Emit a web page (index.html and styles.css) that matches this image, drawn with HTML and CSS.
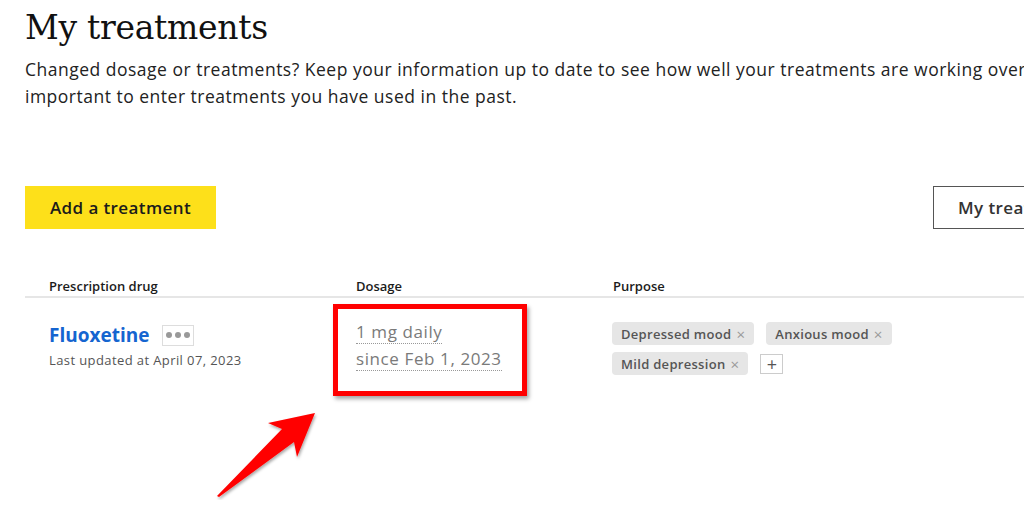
FILE: index.html
```html
<!DOCTYPE html>
<html lang="en">
<head>
<meta charset="utf-8">
<title>My treatments</title>
<link rel="stylesheet" href="styles.css">
</head>
<body>
<div class="page">
  <h1 class="title">My treatments</h1>
  <p class="intro">Changed dosage or treatments? Keep your information up to date to see how well your treatments are working over time. It's also important to enter treatments you have used in the past.</p>

  <div class="actions">
    <button class="btn-add">Add a treatment</button>
    <button class="btn-outline">My treatment history</button>
  </div>

  <div class="table">
    <div class="row head">
      <div class="cell">Prescription drug</div>
      <div class="cell">Dosage</div>
      <div class="cell">Purpose</div>
    </div>
    <div class="row body">
      <div class="cell drug">
        <div class="drug-line">
          <a class="drug-name">Fluoxetine</a>
          <span class="more"><i></i><i></i><i></i></span>
        </div>
        <div class="updated">Last updated at April 07, 2023</div>
      </div>
      <div class="cell dosage">
        <span class="dose">1 mg daily</span>
        <span class="dose">since Feb 1, 2023</span>
        <div class="highlight"></div>
      </div>
      <div class="cell purpose">
        <span class="tag">Depressed mood <b>×</b></span>
        <span class="tag">Anxious mood <b>×</b></span>
        <span class="tag">Mild depression <b>×</b></span>
        <span class="plus">+</span>
      </div>
    </div>
  </div>

  <svg class="arrow" width="120" height="100" viewBox="0 0 120 100">
    <defs>
      <filter id="sh" x="-20%" y="-20%" width="140%" height="140%">
        <feDropShadow dx="1" dy="2" stdDeviation="1.5" flood-color="#000" flood-opacity="0.35"/>
      </filter>
    </defs>
    <polygon filter="url(#sh)" fill="#ff0000" points="115,13 68,23 82,29 17,96 19,97 94,42 97,57"/>
  </svg>
</div>
</body>
</html>
```

FILE: styles.css
```css
* { box-sizing: border-box; }
html, body { margin: 0; padding: 0; background: #fff; }
body {
  font-family: "Open Sans", "Lato", sans-serif;
  color: #1f1f2e;
  width: 1024px;
  height: 512px;
  overflow: hidden;
}
.page {
  position: relative;
  padding: 8px 0 0 25px;
  width: 1200px;
}
.title {
  font-family: "DejaVu Serif", serif;
  font-weight: normal;
  font-size: 33px;
  line-height: 40px;
  margin: 0;
  color: #111;
  letter-spacing: -0.3px;
}
.intro {
  margin: 8px 0 0;
  font-size: 17.5px;
  line-height: 27px;
  color: #222;
  width: 1130px;
  letter-spacing: 0.5px;
}
.actions {
  display: flex;
  justify-content: space-between;
  margin-top: 76px;
  width: 1100px;
}
.btn-add {
  background: #fde01a;
  border: none;
  height: 43px;
  width: 191px;
  font-family: inherit;
  font-size: 17px;
  font-weight: 600;
  color: #1b1b1b;
  padding: 0;
  letter-spacing: 0.4px;
}
.btn-outline {
  background: #fff;
  border: 1px solid #555;
  height: 43px;
  width: 192px;
  font-family: inherit;
  font-size: 17px;
  font-weight: 600;
  color: #333;
  text-align: left;
  padding: 0 0 0 24px;
  white-space: nowrap;
  overflow: hidden;
  letter-spacing: 0.4px;
}
.table { margin-top: 48px; width: 1100px; }
.row {
  display: grid;
  grid-template-columns: 307px 257px 1fr;
  padding-left: 24px;
}
.head {
  font-size: 13px;
  font-weight: 600;
  color: #1b1b1b;
  border-bottom: 2px solid #e6e6e6;
  padding-bottom: 1px;
  line-height: 18px;
}
.body { padding-top: 25px; }
.drug-line { display: flex; align-items: center; height: 24px; }
.drug-name {
  color: #1565d0;
  font-size: 19px;
  font-weight: 700;
}
.more {
  display: inline-flex;
  align-items: center;
  justify-content: center;
  gap: 3px;
  margin-left: 13px;
  width: 32px;
  height: 21px;
  border: 1px solid #ddd;
}
.more i {
  display: block;
  width: 6px;
  height: 6px;
  border-radius: 50%;
  background: #999;
}
.updated {
  font-size: 13px;
  color: #555;
  margin-top: 4px;
  letter-spacing: 0.4px;
}
.dosage { position: relative; padding-top: 0; margin-top: -2px; }
.dose {
  display: table;
  font-size: 17px;
  line-height: 22px;
  color: #7a7a7a;
  border-bottom: 1px dotted #999;
  margin-bottom: 4px;
  letter-spacing: 0.6px;
}
.highlight {
  position: absolute;
  left: -23px;
  top: -17px;
  width: 194px;
  height: 92px;
  border: 5px solid #ff0000;
  box-shadow: 2px 3px 4px rgba(0,0,0,0.35);
}
.purpose {
  display: flex;
  flex-wrap: wrap;
  width: 300px;
  gap: 7px 12px;
  align-items: center;
  align-content: flex-start;
  margin-top: -1px;
  margin-left: -1px;
}
.tag {
  display: inline-flex;
  align-items: center;
  height: 23px;
  padding: 0 9px 0 9px;
  background: #e6e6e6;
  border-radius: 4px;
  font-size: 13px;
  font-weight: 600;
  color: #555;
  letter-spacing: 0.3px;
}
.tag b {
  font-weight: 400;
  color: #999;
  font-size: 15px;
  margin-left: 5px;
}
.plus {
  display: inline-flex;
  align-items: center;
  justify-content: center;
  width: 23px;
  height: 20px;
  border: 1px solid #ccc;
  font-size: 18px;
  color: #555;
  line-height: 1;
}
.arrow {
  position: absolute;
  left: 200px;
  top: 400px;
}
```
